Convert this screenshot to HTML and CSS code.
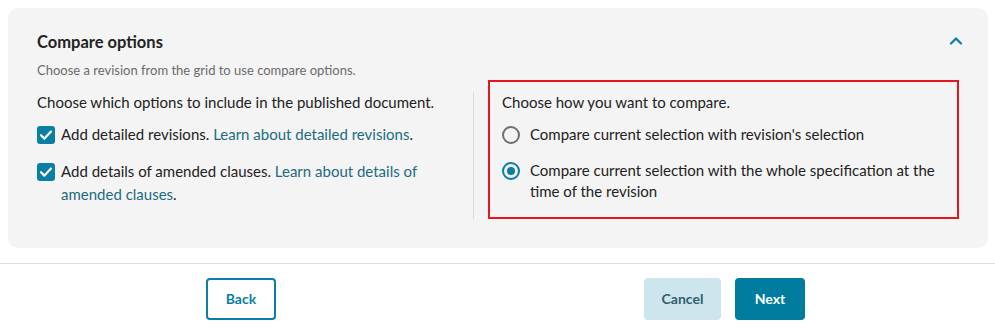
FILE: index.html
```html
<!DOCTYPE html>
<html lang="en">
<head>
<meta charset="utf-8">
<title>Compare options</title>
<link rel="stylesheet" href="styles.css">
</head>
<body>
<section class="card">
  <div class="card-head">
    <h2 class="title">Compare options</h2>
    <svg class="chevron" width="14" height="9" viewBox="0 0 14 9" aria-hidden="true"><path d="M2 7.5 L7 2.5 L12 7.5" fill="none" stroke="#0a7ea4" stroke-width="2.2" stroke-linecap="round" stroke-linejoin="round"/></svg>
  </div>
  <p class="hint">Choose a revision from the grid to use compare options.</p>
  <div class="cols">
    <div class="col-left">
      <p class="lead">Choose which options to include in the published document.</p>
      <label class="check">
        <span class="box"><svg width="18" height="18" viewBox="0 0 18 18"><path d="M4 9.2 L7.4 12.6 L14 5.6" fill="none" stroke="#fff" stroke-width="2.2" stroke-linecap="round" stroke-linejoin="round"/></svg></span>
        <span class="ctext">Add detailed revisions. <a class="link">Learn about detailed revisions</a>.</span>
      </label>
      <label class="check second">
        <span class="box"><svg width="18" height="18" viewBox="0 0 18 18"><path d="M4 9.2 L7.4 12.6 L14 5.6" fill="none" stroke="#fff" stroke-width="2.2" stroke-linecap="round" stroke-linejoin="round"/></svg></span>
        <span class="ctext">Add details of amended clauses. <a class="link">Learn about details of amended clauses</a>.</span>
      </label>
    </div>
    <div class="col-right">
      <div class="highlight">
        <p class="lead">Choose how you want to compare.</p>
        <label class="radio">
          <span class="dot"></span>
          <span class="rtext">Compare current selection with revision's selection</span>
        </label>
        <label class="radio second">
          <span class="dot on"></span>
          <span class="rtext">Compare current selection with the whole specification at the time of the revision</span>
        </label>
      </div>
    </div>
  </div>
</section>
<footer class="footer">
  <button class="btn btn-outline">Back</button>
  <div class="right-btns">
    <button class="btn btn-light">Cancel</button>
    <button class="btn btn-primary">Next</button>
  </div>
</footer>
</body>
</html>
```
FILE: styles.css
```css
* { box-sizing: border-box; }
body {
  margin: 0;
  font-family: Lato, "Open Sans", sans-serif;
  color: #222;
  background: #fff;
}
.card {
  margin: 8px 7px 0 8px;
  background: #f4f4f4;
  border-radius: 10px;
  padding: 24px 29px 28px 29px;
  height: 240px;
}
.card-head {
  display: flex;
  justify-content: space-between;
  align-items: center;
  height: 20px;
}
.title {
  margin: 0;
  font-size: 16.5px;
  font-weight: 700;
  line-height: 20px;
  color: #222;
}
.chevron { margin-right: -4px; margin-top: -4px; }
.hint {
  margin: 10px 0 0 0;
  font-size: 13px;
  line-height: 16px;
  color: #6b6b6b;
}
.cols {
  display: flex;
  margin-top: 2px;
}
.col-left {
  width: 437px;
  margin-top: 12px;
  border-right: 1px solid #dcdcdc;
  padding-bottom: 13px;
}
.col-right {
  flex: 1;
  padding-left: 14px;
}
.highlight {
  border: 2px solid #e4161e;
  padding: 10px 14px 14px 12px;
  height: 139px;
}
.lead {
  margin: 0;
  font-size: 15px;
  line-height: 21px;
}
.check {
  display: flex;
  align-items: flex-start;
  margin-top: 10px;
  font-size: 15px;
  line-height: 23px;
}
.check.second { margin-top: 14px; }
.box {
  flex: none;
  width: 18px;
  height: 18px;
  border-radius: 3px;
  background: #0a7ea4;
  margin-top: 2.5px;
  margin-right: 6px;
  display: flex;
}
.link { color: #1d6b80; }
.radio {
  display: flex;
  align-items: flex-start;
  margin-top: 11px;
  font-size: 15px;
  line-height: 21px;
}
.radio.second { margin-top: 15px; }
.dot {
  flex: none;
  width: 18px;
  height: 18px;
  border-radius: 50%;
  border: 2px solid #6f6f6f;
  margin-top: 2px;
  margin-right: 10px;
  position: relative;
}
.dot.on { border-color: #0a7ea4; }
.dot.on::after {
  content: "";
  position: absolute;
  left: 3px; top: 3px;
  width: 8px; height: 8px;
  border-radius: 50%;
  background: #0a7ea4;
}
.footer {
  margin-top: 15px;
  border-top: 1px solid #dedede;
  padding: 14px 190px 0 206px;
  display: flex;
  justify-content: space-between;
}
.right-btns { display: flex; gap: 14px; }
.btn {
  font-family: Lato, "Open Sans", sans-serif;
  font-size: 14px;
  font-weight: 700;
  height: 42px;
  border-radius: 4px;
  padding: 0 0 2px 0;
  cursor: pointer;
}
.btn-outline {
  width: 70px;
  background: #fff;
  border: 2px solid #0a7ea4;
  color: #0a7ea4;
}
.btn-light {
  width: 77px;
  background: #cde5ec;
  border: none;
  color: #2d5f6c;
}
.btn-primary {
  width: 70px;
  background: #007c9e;
  border: none;
  color: #fff;
}
```
